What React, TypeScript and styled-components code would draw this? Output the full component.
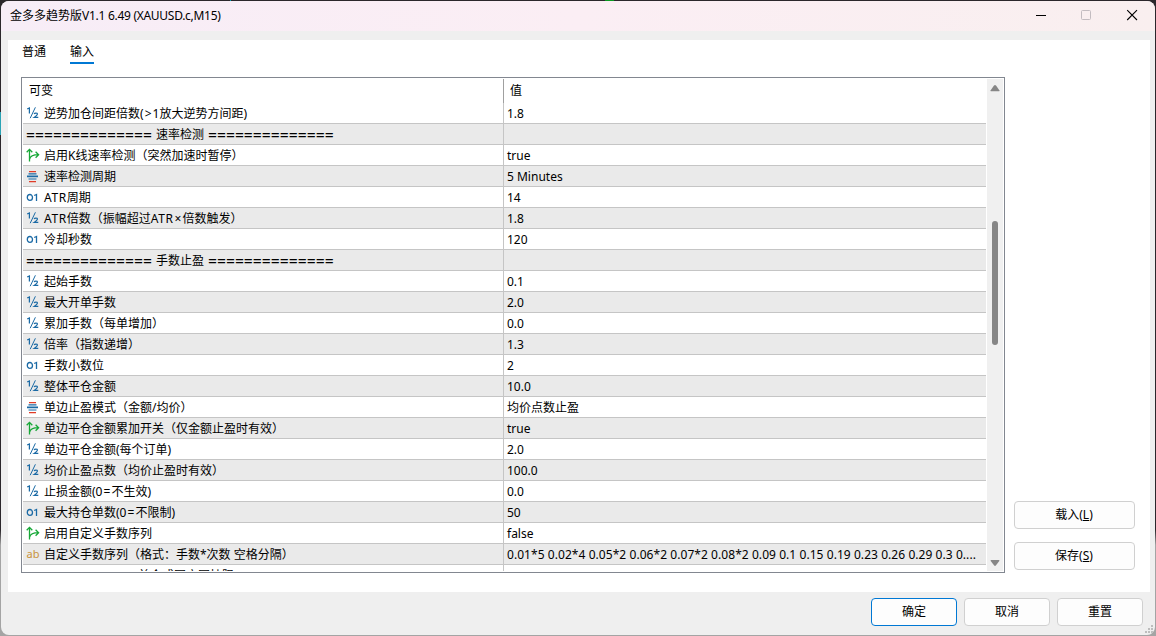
import React from "react";
import styled, { createGlobalStyle } from "styled-components";

const Global = createGlobalStyle`
  * { box-sizing: border-box; }
  html, body { margin: 0; padding: 0; overflow: hidden; }
  body { font: 12px/20px "Noto Sans", "Noto Sans CJK SC", sans-serif; color: #000; }
`;

const Desktop = styled.div`
  width: 1156px;
  height: 636px;
  padding: 1px;
  background:
    linear-gradient(#2aa3b5, #2aa3b5) 0 112px / 1px 23px no-repeat,
    linear-gradient(90deg, #00a0b0 1px, transparent 1px) 230px 0 / 300px 1px no-repeat,
    linear-gradient(90deg, #0a9a20, #0a9a20) 605px 0 / 9px 1px no-repeat,
    linear-gradient(#2b272b 0 530px, #a4a4a4 545px 100%);
`;
const Window = styled.div`
  display: flex;
  flex-direction: column;
  width: 1154px;
  height: 634px;
  border-radius: 8px;
  overflow: hidden;
  background: #efefef;
`;
const TitleBar = styled.header`
  display: flex;
  flex: 0 0 30px;
  justify-content: space-between;
  background: linear-gradient(90deg, #f7edf7, #fbeef4 50%, #f9efef);
`;
const Title = styled.h1`
  margin: 0;
  padding: 5px 0 0 9px;
  font-size: 12px;
  line-height: 20px;
  font-weight: 400;
  white-space: nowrap;
`;
const Latin = styled.span<{ $track: number }>`
  letter-spacing: ${(p) => p.$track}px;
`;
const Symbol = styled.span`
  display: inline-block;
  width: 9px;
  text-align: center;
  line-height: 1;
`;
const Controls = styled.div`
  display: flex;
  margin-right: -1px;
  svg { display: block; width: 46px; height: 30px; }
`;
const Panel = styled.main`
  display: flex;
  flex-direction: column;
  height: 552px;
  margin: 9px 5px 0 7px;
  padding-left: 13px;
  background: #fff;
`;
const Tabs = styled.nav`
  display: flex;
  gap: 24px;
  height: 37px;
`;
const Tab = styled.div<{ $active?: boolean }>`
  width: 24px;
  height: 24px;
  margin-left: 1px;
  margin-right: -1px;
  line-height: 23px;
  white-space: nowrap;
  border-bottom: 2px solid ${(p) => (p.$active ? "#0078d4" : "transparent")};
`;
const Content = styled.div`
  display: flex;
  gap: 9px;
`;
const Grid = styled.section`
  display: flex;
  width: 984px;
  height: 496px;
  padding: 1px;
  border: 1px solid #828790;
  overflow: hidden;
`;
const Rows = styled.div`
  width: 963px;
  height: 492px;
  margin-right: 1px;
  overflow: hidden;
`;
const HeadRow = styled.div`
  display: grid;
  grid-template-columns: 480px 1fr;
  height: 24px;
  line-height: 24px;
`;
const HeadCell = styled.div<{ $value?: boolean }>`
  padding-left: 6px;
  border-left: ${(p) => (p.$value ? "1px solid #a0a0a0" : "0")};
`;
const Row = styled.div<{ $shade: boolean }>`
  display: grid;
  grid-template-columns: 480px 1fr;
  height: 21px;
  line-height: 22px;
  background: ${(p) => (p.$shade ? "#eaeaea" : "#fff")};
  border-bottom: 1px solid #c5c5c5;
  white-space: pre;
`;
const NameCell = styled.div`
  display: flex;
  height: 20px;
  padding-left: 3px;
  svg { flex: none; width: 14px; height: 20px; margin-right: 4px; }
`;
const ValueCell = styled.div`
  height: 20px;
  padding-left: 3px;
  border-left: 1px solid #c5c5c5;
`;
const Section = styled.div`
  display: flex;
  gap: 4px;
`;
const Rule = styled.span`
  font-size: 15.73px;
`;
const Scroll = styled.div`
  display: flex;
  flex-direction: column;
  width: 16px;
  height: 492px;
  background: #f0f0f0;
  svg { display: block; width: 16px; height: 17px; }
`;
const Thumb = styled.div`
  width: 6px;
  height: 124px;
  margin: 125px 0 209px 5px;
  border-radius: 3px;
  background: #868686;
`;
const Side = styled.aside`
  display: flex;
  flex-direction: column;
  gap: 13px;
  padding-top: 424px;
`;
const Footer = styled.footer`
  position: relative;
  display: flex;
  flex: 1;
  gap: 7px;
  justify-content: flex-end;
  padding: 6px 12px 0 0;
`;
const Button = styled.button<{ $wide?: boolean; $primary?: boolean }>`
  width: ${(p) => (p.$wide ? 121 : 86)}px;
  height: 28px;
  padding: 0 ${(p) => (p.$wide ? 1 : 0)}px 0 0;
  border: 1px solid ${(p) => (p.$primary ? "#0078d4" : "#d0d0d0")};
  border-radius: 4px;
  background: #fdfdfd;
  color: #000;
  font: inherit;
  line-height: 26px;
`;
const Grip = styled.svg`
  position: absolute;
  right: 1px;
  bottom: 1px;
`;

type Kind = "half" | "bool" | "enum" | "int" | "text";

const Icon = ({ kind }: { kind: Kind }) => (
  <svg viewBox="0 0 14 20" fill="none">
    {kind === "half" && (
      <g stroke="#1b6aa5" strokeWidth="1.25">
        <path d="M1.2 6L3.4 4.9V10.6" />
        <path d="M9.4 4.3L4.2 15.2" strokeWidth="1" />
        <path d="M8.1 10.9Q8.5 10 9.8 10Q11.5 10 11.4 11.3Q11.3 12.3 8.2 14.4H12.3" />
      </g>
    )}
    {kind === "int" && (
      <g stroke="#1b6aa5" strokeWidth="1.3">
        <ellipse cx="3.9" cy="10.4" rx="2.6" ry="2.9" />
        <path d="M8.2 8.5L10.5 7.5V14" />
      </g>
    )}
    {kind === "bool" && (
      <g stroke="#18a838" strokeWidth="1.3">
        <path d="M3.5 16.5V4.5M0.7 7.3L3.5 4.4L6.3 7.3" />
        <path d="M3.5 14.2C4.2 11.5 7 9.7 12.4 9.7M9.6 6.7L12.6 9.7L9.6 12.7" />
      </g>
    )}
    {kind === "enum" && (
      <g>
        <path d="M3 5h7v1.2H3zM3 15h7v1.2H3z" fill="#e03c28" />
        <path d="M2.5 7.3h8v1.2h-8zM1 9.6h11v1.6H1zM2.5 12.4h8v1.2h-8z" fill="#1b6aa5" />
      </g>
    )}
    {kind === "text" && (
      <text x="0.5" y="14" fill="#c8923a" fontSize="11" fontFamily="Noto Sans">ab</text>
    )}
  </svg>
);

type Item = { kind?: Kind; name: string; value?: string; rule?: number };
const items: Item[] = [
  { kind: "half", name: "逆势加仓间距倍数(>1放大逆势方间距)", value: "1.8" },
  { name: "速率检测" },
  { kind: "bool", name: "启用K线速率检测（突然加速时暂停）", value: "true" },
  { kind: "enum", name: "速率检测周期", value: "5 Minutes" },
  { kind: "int", name: "ATR周期", value: "14" },
  { kind: "half", name: "ATR倍数（振幅超过ATR×倍数触发）", value: "1.8" },
  { kind: "int", name: "冷却秒数", value: "120" },
  { name: "手数止盈" },
  { kind: "half", name: "起始手数", value: "0.1" },
  { kind: "half", name: "最大开单手数", value: "2.0" },
  { kind: "half", name: "累加手数（每单增加）", value: "0.0" },
  { kind: "half", name: "倍率（指数递增）", value: "1.3" },
  { kind: "int", name: "手数小数位", value: "2" },
  { kind: "half", name: "整体平仓金额", value: "10.0" },
  { kind: "enum", name: "单边止盈模式（金额/均价）", value: "均价点数止盈" },
  { kind: "bool", name: "单边平仓金额累加开关（仅金额止盈时有效）", value: "true" },
  { kind: "half", name: "单边平仓金额(每个订单)", value: "2.0" },
  { kind: "half", name: "均价止盈点数（均价止盈时有效）", value: "100.0" },
  { kind: "half", name: "止损金额(0=不生效)", value: "0.0" },
  { kind: "int", name: "最大持仓单数(0=不限制)", value: "50" },
  { kind: "bool", name: "启用自定义手数序列", value: "false" },
  {
    kind: "text",
    name: "自定义手数序列（格式：手数*次数 空格分隔）",
    value: "0.01*5 0.02*4 0.05*2 0.06*2 0.07*2 0.08*2 0.09 0.1 0.15 0.19 0.23 0.26 0.29 0.3 0....",
  },
  { name: "首个或同方同挂限", rule: 12 },
];

const Label = ({ text }: { text: string }) => (
  <span>
    {text.split(/([>=×]|ATR)/).map((part, i) =>
      part === "ATR" ? (
        <Latin key={i} $track={0.6}>{part}</Latin>
      ) : i % 2 ? (
        <Symbol key={i}>{part}</Symbol>
      ) : (
        part
      )
    )}
  </span>
);

const SectionTitle = ({ text, rule = 14 }: { text: string; rule?: number }) => (
  <Section>
    <Rule>{"=".repeat(rule)}</Rule>
    {text}
    <Rule>{"=".repeat(rule)}</Rule>
  </Section>
);

export default function App() {
  return (
    <Desktop>
      <Global />
      <Window>
        <TitleBar>
          <Title>
            金多多趋势版<Latin $track={-0.28}>V1.1 6.49 (XAUUSD.c,M15)</Latin>
          </Title>
          <Controls>
            <svg viewBox="0 0 46 30"><path d="M18 14.5H28" stroke="#000" /></svg>
            <svg viewBox="0 0 46 30"><rect x="17.5" y="9.5" width="9" height="9" rx="1" fill="none" stroke="#c3bcc0" /></svg>
            <svg viewBox="0 0 46 30"><path d="M17.2 9.2L27 19M27 9.2L17.2 19" stroke="#000" strokeWidth="1.1" /></svg>
          </Controls>
        </TitleBar>
        <Panel>
          <Tabs>
            <Tab>普通</Tab>
            <Tab $active>输入</Tab>
          </Tabs>
          <Content>
            <Grid>
              <Rows>
                <HeadRow>
                  <HeadCell>可变</HeadCell>
                  <HeadCell $value>值</HeadCell>
                </HeadRow>
                {items.map((item, i) => (
                  <Row key={i} $shade={i % 2 === 1}>
                    <NameCell>
                      {item.kind ? (
                        <><Icon kind={item.kind} /><Label text={item.name} /></>
                      ) : (
                        <SectionTitle text={item.name} rule={item.rule} />
                      )}
                    </NameCell>
                    <ValueCell>
                      {item.value && <Latin $track={item.value.length > 20 ? 0.06 : 0}>{item.value}</Latin>}
                    </ValueCell>
                  </Row>
                ))}
              </Rows>
              <Scroll>
                <svg viewBox="0 0 16 17"><path d="M3.7 12.2V11.2L7 6.5Q8 5.3 9 6.5L12.3 11.2V12.2Z" fill="#868686" /></svg>
                <Thumb />
                <svg viewBox="0 0 16 17"><path d="M3.7 6V7L7 11.3Q8 12.5 9 11.3L12.3 7V6Z" fill="#868686" /></svg>
              </Scroll>
            </Grid>
            <Side>
              <Button $wide>载入(<u>L</u>)</Button>
              <Button $wide>保存(<u>S</u>)</Button>
            </Side>
          </Content>
        </Panel>
        <Footer>
          <Button $primary>确定</Button>
          <Button>取消</Button>
          <Button>重置</Button>
          <Grip width="10" height="10" viewBox="0 0 10 10">
            <path d="M7 1h2v2h-2zM4 4h2v2h-2zM7 4h2v2h-2zM1 7h2v2h-2zM4 7h2v2h-2zM7 7h2v2h-2z" fill="#bdbdbd" />
          </Grip>
        </Footer>
      </Window>
    </Desktop>
  );
}
